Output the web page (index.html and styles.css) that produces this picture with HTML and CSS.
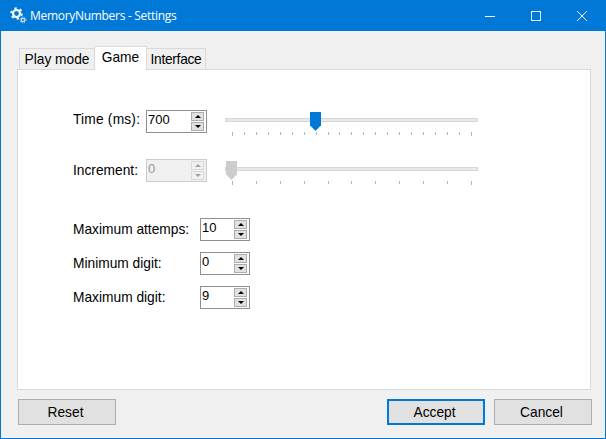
FILE: index.html
```html
<!DOCTYPE html>
<html lang="en">
<head>
    <meta charset="UTF-8">
    <meta name="viewport" content="width=device-width, initial-scale=1.0">
    <title>MemoryNumbers - Settings</title>
    <link rel="stylesheet" href="styles.css">
</head>
<body>
    <div class="window">
        <div class="titlebar">
            <svg class="app-icon" width="17" height="17" viewBox="0 0 17 17">
                <circle cx="6.5" cy="6.5" r="3.5" fill="none" stroke="#fff" stroke-width="2.2"/>
                <circle cx="6.5" cy="6.5" r="5.4" fill="none" stroke="#fff" stroke-width="1.6" stroke-dasharray="2.4 3.25"/>
                <circle cx="13" cy="13" r="1.7" fill="none" stroke="#cfdfee" stroke-width="1.3"/>
                <circle cx="13" cy="13" r="3" fill="none" stroke="#cfdfee" stroke-width="1" stroke-dasharray="1.2 1.2"/>
            </svg>
            <span class="title">MemoryNumbers - Settings</span>
            <div class="controls">
                <div class="control">
                    <svg width="10" height="10" viewBox="0 0 10 10"><path d="M0 5.5H10" stroke="#fff" fill="none"/></svg>
                </div>
                <div class="control">
                    <svg width="10" height="10" viewBox="0 0 10 10"><path d="M.5 .5H9.5V9.5H.5Z" stroke="#fff" fill="none"/></svg>
                </div>
                <div class="control">
                    <svg width="10" height="10" viewBox="0 0 10 10"><path d="M0 0L10 10M10 0L0 10" stroke="#fff" fill="none"/></svg>
                </div>
            </div>
        </div>

        <div class="content">
            <div class="tabs">
                <div class="tab tab-play">Play mode</div>
                <div class="tab tab-game active">Game</div>
                <div class="tab tab-interface">Interface</div>
            </div>

            <div class="panel">
                <div class="slider-rows">
                    <label class="time-label">Time (ms):</label>
                    <div class="spinner">
                        <span class="value">700</span>
                        <div class="spin"><span class="up"></span><span class="down"></span></div>
                    </div>
                    <div class="slider">
                        <div class="track"></div>
                        <div class="thumb time-thumb"></div>
                        <div class="ticks" id="time-ticks"></div>
                    </div>

                    <label>Increment:</label>
                    <div class="spinner disabled">
                        <span class="value">0</span>
                        <div class="spin"><span class="up"></span><span class="down"></span></div>
                    </div>
                    <div class="slider">
                        <div class="track"></div>
                        <div class="thumb increment-thumb"></div>
                        <div class="ticks" id="increment-ticks"></div>
                    </div>
                </div>

                <div class="number-rows">
                    <label>Maximum attemps:</label>
                    <div class="spinner">
                        <span class="value">10</span>
                        <div class="spin"><span class="up"></span><span class="down"></span></div>
                    </div>

                    <label>Minimum digit:</label>
                    <div class="spinner">
                        <span class="value">0</span>
                        <div class="spin"><span class="up"></span><span class="down"></span></div>
                    </div>

                    <label>Maximum digit:</label>
                    <div class="spinner">
                        <span class="value">9</span>
                        <div class="spin"><span class="up"></span><span class="down"></span></div>
                    </div>
                </div>
            </div>

            <div class="footer">
                <button class="button">Reset</button>
                <div class="footer-right">
                    <button class="button default-button">Accept</button>
                    <button class="button">Cancel</button>
                </div>
            </div>
        </div>
    </div>

    <script>
        function addTicks(id, count) {
            const box = document.getElementById(id);
            for (let i = 0; i < count; i++) {
                const tick = document.createElement('span');
                if (i === 0 || i === count - 1) tick.className = 'end';
                box.appendChild(tick);
            }
        }

        addTicks('time-ticks', 21);
        addTicks('increment-ticks', 11);
    </script>
</body>
</html>
```

FILE: styles.css
```css
html, body {
    margin: 0;
    padding: 0;
    overflow: hidden;
}
body {
    font-family: "Liberation Sans", Arial, sans-serif;
    font-size: 13.75px;
    color: #000000;
}
.window {
    width: 606px;
    height: 439px;
    box-sizing: border-box;
    display: flex;
    flex-direction: column;
    background-color: #f0f0f0;
    border: 1px solid #0078d7;
    border-top: none;
}
.titlebar {
    height: 31px;
    flex: none;
    display: flex;
    align-items: center;
    background-color: #0078d7;
    color: #ffffff;
    font-family: "Open Sans", sans-serif;
    font-size: 12px;
    letter-spacing: -0.3px;
}
.app-icon {
    margin-left: 9px;
    margin-right: 3px;
    margin-top: -1px;
}
.title {
    margin-top: -1px;
}
.controls {
    margin-left: auto;
    display: flex;
}
.control {
    width: 46px;
    height: 31px;
    display: flex;
    align-items: center;
    justify-content: center;
}
.content {
    flex: 1;
    display: flex;
    flex-direction: column;
    padding: 15px 13px 13px 16px;
}
.tabs {
    display: flex;
    align-items: flex-end;
    height: 23px;
    padding-left: 3px;
}
.tab {
    height: 21px;
    line-height: 21px;
    box-sizing: border-box;
    text-align: center;
    background-color: #f0f0f0;
    border: 1px solid #d9d9d9;
    border-bottom: none;
    margin-left: -1px;
}
.tab-play {
    width: 76px;
}
.tab-game {
    width: 53px;
}
.tab-interface {
    width: 60px;
    letter-spacing: -0.3px;
}
.tab.active {
    height: 24px;
    background-color: #ffffff;
    margin-bottom: -1px;
    position: relative;
    z-index: 1;
}
.panel {
    height: 321px;
    box-sizing: border-box;
    background-color: #ffffff;
    border: 1px solid #d9d9d9;
    margin-right: 1px;
    padding: 40px 0 0 55px;
}
.slider-rows {
    display: grid;
    grid-template-columns: 73px 61px 253px;
    grid-auto-rows: 23px;
    column-gap: 0;
    row-gap: 26px;
}
.number-rows {
    display: grid;
    grid-template-columns: 127px 50px;
    grid-auto-rows: 23px;
    row-gap: 11px;
    margin-top: 36px;
}
label {
    display: flex;
    align-items: center;
    white-space: nowrap;
}
.time-label {
    padding-bottom: 4px;
    letter-spacing: 0.2px;
}
.spinner {
    box-sizing: border-box;
    height: 23px;
    display: flex;
    align-items: center;
    justify-content: space-between;
    background-color: #ffffff;
    border: 1px solid #8f8f8f;
    padding: 1px 2px 1px 1px;
}
.value {
    font-size: 13px;
    padding-bottom: 4px;
}
.spin {
    width: 13px;
    height: 19px;
    display: flex;
    flex-direction: column;
    gap: 1px;
}
.up, .down {
    flex: 1;
    display: flex;
    align-items: center;
    justify-content: center;
    box-sizing: border-box;
    background-color: #e1e1e1;
    border: 1px solid #adadad;
}
.up::before, .down::before {
    content: "";
    border-left: 3px solid transparent;
    border-right: 3px solid transparent;
}
.up::before {
    border-bottom: 3px solid #000000;
}
.down::before {
    border-top: 3px solid #000000;
}
.spinner.disabled {
    background-color: #f0f0f0;
    border-color: #cccccc;
}
.spinner.disabled .value {
    color: #8d9aa5;
}
.spinner.disabled .up, .spinner.disabled .down {
    background-color: #f0f0f0;
    border-color: #d9d9d9;
}
.spinner.disabled .up::before {
    border-bottom-color: #a0a0a0;
}
.spinner.disabled .down::before {
    border-top-color: #a0a0a0;
}
.slider {
    position: relative;
    height: 23px;
    margin-left: 18px;
    width: 253px;
    padding-top: 8px;
    box-sizing: border-box;
}
.track {
    height: 4px;
    box-sizing: border-box;
    background-color: #e7eae8;
    border: 1px solid #d6d6d6;
}
.thumb {
    position: absolute;
    top: 2px;
    width: 11px;
    height: 19px;
    clip-path: polygon(0 0, 100% 0, 100% 70%, 50% 100%, 0 70%);
}
.time-thumb {
    left: 85px;
    background-color: #0078d7;
}
.increment-thumb {
    left: 1px;
    background-color: #cccccc;
}
.ticks {
    display: flex;
    justify-content: space-between;
    align-items: flex-start;
    margin: 10px 6px 0 7px;
}
.ticks span {
    width: 1px;
    height: 3px;
    background-color: #b4b4b4;
}
.ticks span.end {
    height: 4px;
}
.footer {
    display: flex;
    justify-content: space-between;
    margin-top: 9px;
    padding-left: 1px;
}
.footer-right {
    display: flex;
    gap: 9px;
}
.button {
    width: 98px;
    height: 26px;
    box-sizing: border-box;
    background-color: #e1e1e1;
    border: 1px solid #adadad;
    font-family: "Liberation Sans", Arial, sans-serif;
    font-size: 13.75px;
    color: #000000;
    padding: 0 3px 0 0;
}
.default-button {
    border: 2px solid #0078d7;
}
```
